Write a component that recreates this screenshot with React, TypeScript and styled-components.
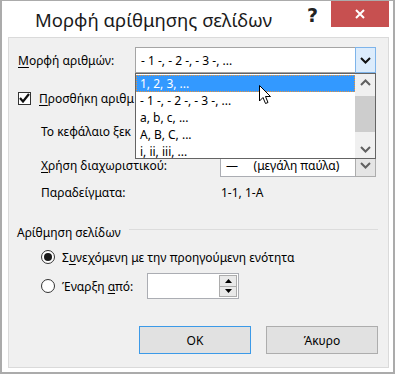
import React from "react";
import styled, { createGlobalStyle } from "styled-components";

const FONT = `"Noto Sans", "Open Sans", sans-serif`;

const Global = createGlobalStyle`
  html, body { margin: 0; padding: 0; background: #fff; }
  body { font-family: ${FONT}; font-size: 12px; color: #000; }
  * { box-sizing: border-box; }
`;

const Window = styled.div`
  width: 395px;
  height: 374px;
  background: #fff;
  border: 2px solid #ababab;
  border-top-width: 1px;
  display: flex;
  flex-direction: column;
  position: relative;
`;

const TitleBar = styled.div`
  height: 36px;
  display: flex;
  align-items: flex-start;
  padding-left: 33px;
`;

const Title = styled.div`
  font-size: 18.5px;
  line-height: 26px;
  margin-top: 6px;
  color: #1a1a1a;
  flex: 1;
`;

const Help = styled.div`
  font-family: "DejaVu Sans", sans-serif;
  font-weight: bold;
  font-size: 19px;
  line-height: 26px;
  margin-top: 1px;
  margin-right: 13px;
  color: #222;
`;

const Close = styled.div`
  width: 58px;
  height: 26px;
  background: #c75050;
  margin-right: 4px;
  display: flex;
  align-items: center;
  justify-content: center;
`;

const Client = styled.div`
  flex: 1;
  margin: 0 4px 4px 6px;
  border: 1px solid #dadada;
  background: #f0f0f0;
  padding: 0 9px;
  display: flex;
  flex-direction: column;
  position: relative;
`;

const Row = styled.div<{ $top: number; $h: number; $indent?: number }>`
  display: flex;
  align-items: center;
  height: ${(p) => p.$h}px;
  margin-top: ${(p) => p.$top}px;
  padding-left: ${(p) => p.$indent ?? 0}px;
  white-space: nowrap;
`;

const Label = styled.span<{ $w?: number }>`
  display: inline-block;
  width: ${(p) => (p.$w ? `${p.$w}px` : "auto")};
  flex-shrink: 0;
`;

const U = styled.span`
  text-decoration: underline;
  text-underline-offset: 2px;
`;

const ComboWrap = styled.div<{ $w: number; $h: number }>`
  position: relative;
  width: ${(p) => p.$w}px;
  height: ${(p) => p.$h}px;
  flex-shrink: 0;
`;

const ComboBox = styled.div<{ $border: string }>`
  width: 100%;
  height: 100%;
  background: #fff;
  border: 1px solid ${(p) => p.$border};
  display: flex;
  align-items: center;
  padding-left: 5px;
  position: relative;
`;

const ComboText = styled.span`
  flex: 1;
  white-space: pre;
`;

const DropBtn = styled.div<{ $bg: string; $border: string }>`
  position: absolute;
  right: -1px;
  top: -1px;
  bottom: -1px;
  width: 21px;
  background: ${(p) => p.$bg};
  border: 1px solid ${(p) => p.$border};
  display: flex;
  align-items: center;
  justify-content: center;
`;

const List = styled.div`
  position: absolute;
  left: 0;
  top: 100%;
  width: 100%;
  height: 86px;
  background: #fff;
  border: 1px solid #646464;
  z-index: 5;
  overflow: hidden;
  display: flex;
`;

const Items = styled.div`
  flex: 1;
  padding-top: 1px;
`;

const Item = styled.div<{ $sel?: boolean }>`
  height: 17px;
  line-height: 15px;
  padding-left: 3px;
  white-space: pre;
  background: ${(p) => (p.$sel ? "#3399ff" : "transparent")};
  color: ${(p) => (p.$sel ? "#fff" : "#000")};
  border: 1px dotted ${(p) => (p.$sel ? "#e8933c" : "transparent")};
`;

const Scroll = styled.div`
  width: 20px;
  background: #f0f0f0;
  display: flex;
  flex-direction: column;
  align-items: stretch;
`;

const ScrollArrow = styled.div`
  height: 17px;
  display: flex;
  align-items: center;
  justify-content: center;
`;

const Thumb = styled.div`
  height: 36px;
  margin-top: 5px;
  background: #cdcdcd;
`;

const Track = styled.div`
  flex: 1;
`;

const CheckBox = styled.div`
  width: 13px;
  height: 13px;
  border: 1px solid #333;
  background: #fff;
  margin-right: 8px;
  display: flex;
  align-items: center;
  justify-content: center;
  flex-shrink: 0;
`;

const GroupRow = styled.div`
  display: flex;
  align-items: center;
  height: 18px;
  margin-top: 22px;
  margin-left: -1px;
  margin-right: 1px;
`;

const GroupLine = styled.div`
  flex: 1;
  height: 1px;
  background: #dcdcdc;
  margin-left: 8px;
  margin-top: -5px;
`;

const Radio = styled.div<{ $on?: boolean }>`
  width: 14px;
  height: 14px;
  border-radius: 50%;
  border: 1px solid #333;
  background: #fff;
  margin-right: 7px;
  display: flex;
  align-items: center;
  justify-content: center;
  &::after {
    content: "";
    display: ${(p) => (p.$on ? "block" : "none")};
    width: 8px;
    height: 8px;
    border-radius: 50%;
    background: #1a1a1a;
  }
`;

const Spinner = styled.div`
  width: 92px;
  height: 26px;
  background: #fff;
  border: 1px solid #abadb3;
  margin-left: 14px;
  display: flex;
  justify-content: flex-end;
  padding: 1px 1px 1px 0;
`;

const SpinCol = styled.div`
  width: 18px;
  display: flex;
  flex-direction: column;
`;

const SpinBtn = styled.div`
  flex: 1;
  background: #e9e9e9;
  border: 1px solid #acacac;
  display: flex;
  align-items: center;
  justify-content: center;
  & + & { border-top: none; }
`;

const Buttons = styled.div`
  display: flex;
  justify-content: flex-end;
  gap: 15px;
  margin-top: 27px;
  padding-right: 1px;
`;

const Button = styled.div<{ $default?: boolean }>`
  width: 112px;
  height: 28px;
  background: #e1e1e1;
  border: 1px solid ${(p) => (p.$default ? "#3c9ae8" : "#adadad")};
  display: flex;
  align-items: center;
  justify-content: center;
`;

const Cursor = styled.svg`
  position: absolute;
  left: 257px;
  top: 84px;
  z-index: 10;
`;

const Chevron = ({ color }: { color: string }) => (
  <svg width="11" height="7" viewBox="0 0 11 7">
    <path d="M1 1 L5.5 5.5 L10 1" stroke={color} strokeWidth="2" fill="none" />
  </svg>
);

const ChevronUp = ({ color }: { color: string }) => (
  <svg width="11" height="7" viewBox="0 0 11 7">
    <path d="M1 6 L5.5 1.5 L10 6" stroke={color} strokeWidth="2" fill="none" />
  </svg>
);

export default function App() {
  return (
    <>
      <Global />
      <Window>
        <TitleBar>
          <Title>Μορφή αρίθμησης σελίδων</Title>
          <Help>?</Help>
          <Close>
            <svg width="10" height="10" viewBox="0 0 10 10">
              <path d="M1 1 L9 9 M9 1 L1 9" stroke="#fff" strokeWidth="2" />
            </svg>
          </Close>
        </TitleBar>
        <Client>
          <Row $top={9} $h={26}>
            <Label $w={117}>
              <U>Μ</U>ορφή αριθμών:
            </Label>
            <ComboWrap $w={241} $h={26}>
              <ComboBox $border="#a5a5a5">
                <ComboText>- 1 -, - 2 -, - 3 -, ...</ComboText>
                <DropBtn $bg="#dcecfc" $border="#7eb4ea">
                  <Chevron color="#111" />
                </DropBtn>
              </ComboBox>
              <List>
                <Items>
                  <Item $sel>1, 2, 3, ...</Item>
                  <Item>- 1 -, - 2 -, - 3 -, ...</Item>
                  <Item>a, b, c, ...</Item>
                  <Item>A, B, C, ...</Item>
                  <Item>i, ii, iii, ...</Item>
                </Items>
                <Scroll>
                  <ScrollArrow>
                    <ChevronUp color="#606060" />
                  </ScrollArrow>
                  <Thumb />
                  <Track />
                  <ScrollArrow>
                    <Chevron color="#606060" />
                  </ScrollArrow>
                </Scroll>
              </List>
            </ComboWrap>
          </Row>
          <Row $top={16} $h={18}>
            <CheckBox>
              <svg width="11" height="10" viewBox="0 0 11 10">
                <path d="M1 5 L4 8.5 L10 1" stroke="#111" strokeWidth="2.2" fill="none" />
              </svg>
            </CheckBox>
            <Label>
              <U>Π</U>ροσθήκη αριθμ
            </Label>
          </Row>
          <Row $top={15} $h={18} $indent={23}>
            <Label>Το κεφάλαιο ξεκ</Label>
          </Row>
          <Row $top={14} $h={23} $indent={23}>
            <Label $w={179}>
              <U>Χ</U>ρήση διαχωριστικού:
            </Label>
            <ComboWrap $w={156} $h={23}>
              <ComboBox $border="#abadb3">
                <ComboText>{"—     (μεγάλη παύλα)"}</ComboText>
                <DropBtn $bg="#e5e5e5" $border="#acacac">
                  <Chevron color="#606060" />
                </DropBtn>
              </ComboBox>
            </ComboWrap>
          </Row>
          <Row $top={6} $h={18} $indent={23}>
            <Label $w={180}>Παραδείγματα:</Label>
            <Label>1-1, 1-A</Label>
          </Row>
          <GroupRow>
            <Label>Αρίθμηση σελίδων</Label>
            <GroupLine />
          </GroupRow>
          <Row $top={7} $h={18} $indent={23}>
            <Radio $on />
            <Label>
              Σ<U>υ</U>νεχόμενη με την προηγούμενη ενότητα
            </Label>
          </Row>
          <Row $top={7} $h={26} $indent={23}>
            <Radio />
            <Label>
              Έναρξη <U>α</U>πό:
            </Label>
            <Spinner>
              <SpinCol>
                <SpinBtn>
                  <svg width="7" height="4" viewBox="0 0 7 4">
                    <path d="M0 4 L3.5 0 L7 4 Z" fill="#000" />
                  </svg>
                </SpinBtn>
                <SpinBtn>
                  <svg width="7" height="4" viewBox="0 0 7 4">
                    <path d="M0 0 L3.5 4 L7 0 Z" fill="#000" />
                  </svg>
                </SpinBtn>
              </SpinCol>
            </Spinner>
          </Row>
          <Buttons>
            <Button $default>OK</Button>
            <Button>Άκυρο</Button>
          </Buttons>
        </Client>
        <Cursor width="13" height="20" viewBox="0 0 13 20">
          <path
            d="M0.5 0.5 L0.5 16 L4 12.5 L6.5 18.5 L9 17.5 L6.5 11.5 L11.5 11.5 Z"
            fill="#fff"
            stroke="#000"
            strokeWidth="1"
          />
        </Cursor>
      </Window>
    </>
  );
}
